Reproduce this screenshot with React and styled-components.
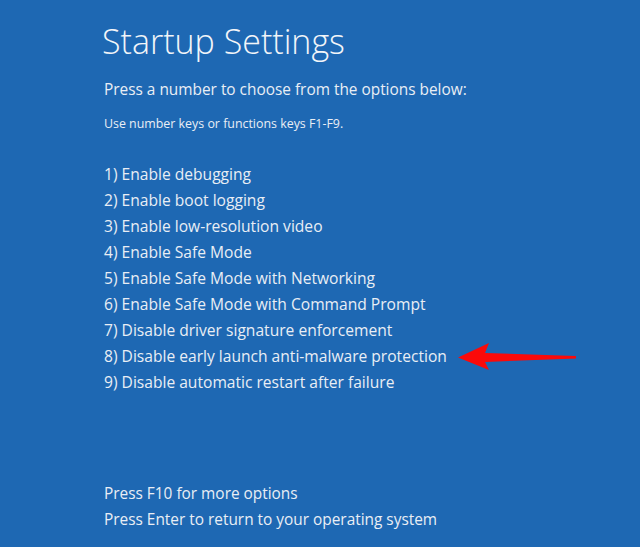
import React from 'react';
import styled, { createGlobalStyle } from 'styled-components';

const Global = createGlobalStyle`
  html, body {
    margin: 0;
    padding: 0;
    background: #1e68b3;
  }
  body {
    font-family: "Open Sans", "Noto Sans", sans-serif;
    color: #e9eef5;
  }
`;

const Screen = styled.div`
  width: 640px;
  height: 547px;
  background: #1e68b3;
  box-sizing: border-box;
  padding: 20px 0 0 102px;
  display: flex;
  flex-direction: column;
  overflow: hidden;
`;

const Title = styled.h1`
  margin: 0;
  font-weight: 300;
  font-size: 34px;
  line-height: 42px;
  color: #f2f5f9;
`;

const Lead = styled.p`
  margin: 17px 0 0 2px;
  font-size: 15.4px;
  line-height: 22px;
`;

const Hint = styled.p`
  margin: 14px 0 0 2px;
  font-size: 12.4px;
  line-height: 18px;
`;

const Options = styled.ol`
  list-style: none;
  margin: 28px 0 0 2px;
  padding: 0;
`;

const Option = styled.li`
  position: relative;
  font-size: 15.6px;
  line-height: 26px;
  white-space: nowrap;
`;

const Arrow = styled.svg`
  position: absolute;
  left: 352px;
  top: -1px;
`;

const Footer = styled.div`
  margin: auto 0 14px 2px;
  font-size: 15.4px;
  line-height: 26px;
`;

const options = [
  'Enable debugging',
  'Enable boot logging',
  'Enable low-resolution video',
  'Enable Safe Mode',
  'Enable Safe Mode with Networking',
  'Enable Safe Mode with Command Prompt',
  'Disable driver signature enforcement',
  'Disable early launch anti-malware protection',
  'Disable automatic restart after failure',
];

const App = () => {
  return (
    <>
      <Global />
      <Screen>
        <Title>Startup Settings</Title>
        <Lead>Press a number to choose from the options below:</Lead>
        <Hint>Use number keys or functions keys F1-F9.</Hint>
        <Options>
          {options.map((o, i) => (
            <Option key={o}>
              {i + 1}) {o}
              {i === 7 && (
                <Arrow width="122" height="29" viewBox="0 0 122 29">
                  <path d="M2 15.5 L33 1 L29 11 L120 14 L120 16.5 L29 20 L33 28 Z" fill="#fb0a0a" />
                </Arrow>
              )}
            </Option>
          ))}
        </Options>
        <Footer>
          <div>Press F10 for more options</div>
          <div>Press Enter to return to your operating system</div>
        </Footer>
      </Screen>
    </>
  );
};

export default App;
